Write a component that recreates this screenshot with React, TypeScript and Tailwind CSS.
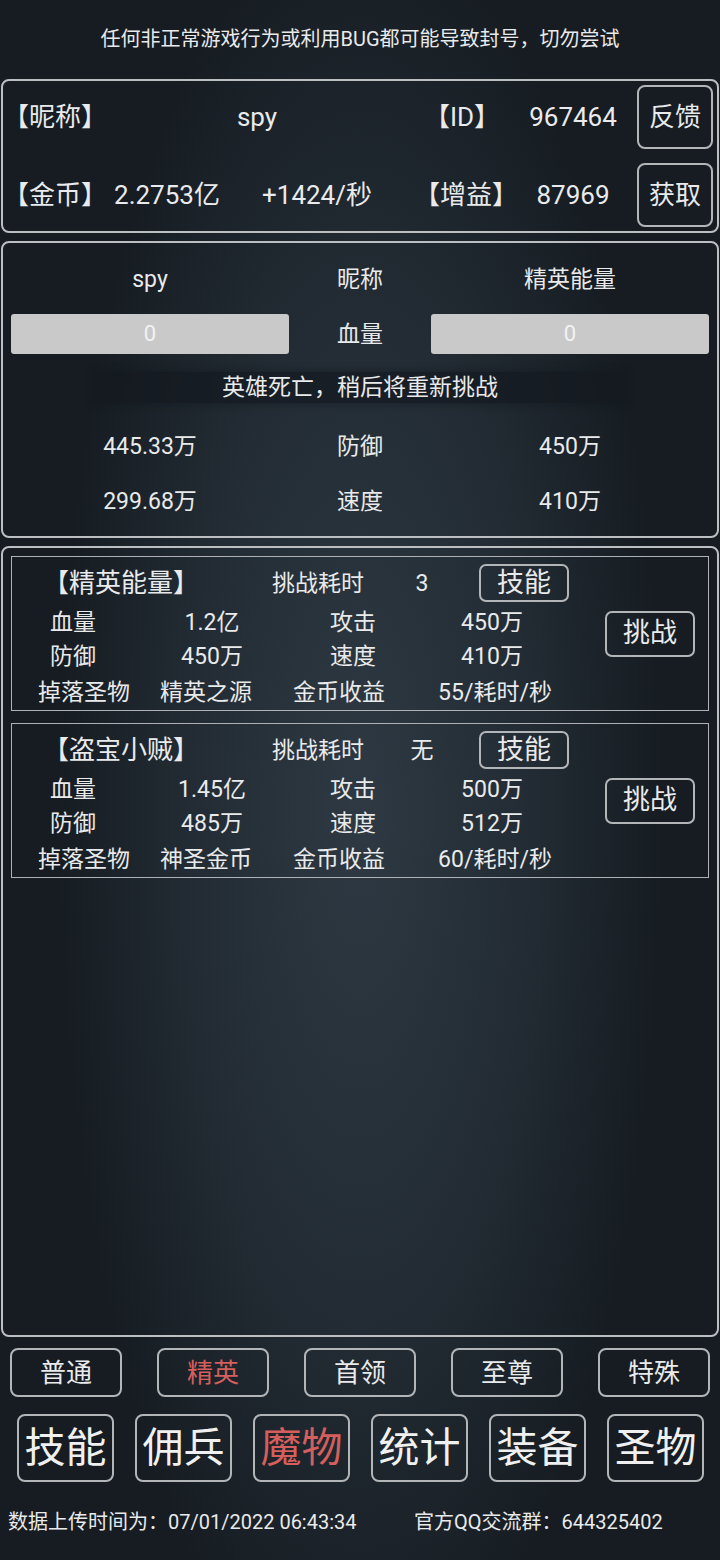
import React from "react";

const font = { fontFamily: 'Roboto, "Noto Sans CJK SC", sans-serif' };

function Card({
  title,
  time,
  hp,
  atk,
  def,
  spd,
  drop,
  gold,
}: {
  title: string;
  time: string;
  hp: string;
  atk: string;
  def: string;
  spd: string;
  drop: string;
  gold: string;
}) {
  return (
    <div className="flex h-[155px] border-[1.5px] border-[#aeb2b6]">
      <div className="flex w-[596px] flex-col">
        <div className="mt-[7px] flex h-[38px] items-center">
          <div className="w-[218px] text-center text-[26px] leading-none">{title}</div>
          <div className="w-[176px] text-center text-[23px] leading-none">挑战耗时</div>
          <div className="w-[32px] text-center text-[23px] leading-none">{time}</div>
          <div className="ml-[41px] flex h-[38px] w-[90px] items-center justify-center rounded-[7px] border-2 border-[#b3b6b9] text-[27px] leading-none">
            技能
          </div>
        </div>
        <div className="mt-[4px] flex h-[34px] items-center text-[23px] leading-none">
          <div className="w-[122px] text-center">血量</div>
          <div className="w-[156px] text-center">{hp}</div>
          <div className="w-[126px] text-center">攻击</div>
          <div className="w-[152px] text-center">{atk}</div>
        </div>
        <div className="flex h-[34px] items-center text-[23px] leading-none">
          <div className="w-[122px] text-center">防御</div>
          <div className="w-[156px] text-center">{def}</div>
          <div className="w-[126px] text-center">速度</div>
          <div className="w-[152px] text-center">{spd}</div>
        </div>
        <div className="mt-[1px] flex h-[36px] items-center text-[23px] leading-none">
          <div className="w-[144px] text-center">掉落圣物</div>
          <div className="w-[100px] text-center">{drop}</div>
          <div className="w-[166px] text-center">金币收益</div>
          <div className="w-[146px] text-center">{gold}</div>
        </div>
      </div>
      <div className="flex flex-1 items-center">
        <div className="ml-[-3px] flex h-[46px] w-[90px] items-center justify-center rounded-[7px] border-2 border-[#b3b6b9] text-[27px] leading-none">
          挑战
        </div>
      </div>
    </div>
  );
}

export default function App() {
  const tabs = ["普通", "精英", "首领", "至尊", "特殊"];
  const navs = ["技能", "佣兵", "魔物", "统计", "装备", "圣物"];
  return (
    <div
      style={font}
      className="flex h-[1560px] w-[720px] flex-col overflow-hidden bg-[radial-gradient(ellipse_42%_58%_at_50%_52%,#2e3943_0%,#232c34_55%,#161c22_100%)] text-[#e9eaeb]"
    >
      <div className="flex h-[79px] items-center justify-center pb-[2px] text-[20px] leading-none">
        任何非正常游戏行为或利用BUG都可能导致封号，切勿尝试
      </div>

      {/* panel 1 */}
      <div className="mx-[1px] flex h-[154px] flex-col gap-[14px] rounded-[8px] border-2 border-[#bcbfc2] pt-[4px] text-[26px] leading-none">
        <div className="flex h-[64px] items-center">
          <div className="w-[97px] text-center">【昵称】</div>
          <div className="w-[314px] text-center">spy</div>
          <div className="w-[96px] text-center">【ID】</div>
          <div className="w-[126px] text-center">967464</div>
          <div className="ml-[1px] flex h-[64px] w-[76px] items-center justify-center rounded-[8px] border-2 border-[#b3b6b9]">
            反馈
          </div>
        </div>
        <div className="flex h-[64px] items-center">
          <div className="w-[97px] text-center">【金币】</div>
          <div className="w-[134px] text-center">2.2753亿</div>
          <div className="w-[166px] text-center">+1424/秒</div>
          <div className="ml-[14px] w-[96px] text-center">【增益】</div>
          <div className="w-[126px] text-center">87969</div>
          <div className="ml-[1px] flex h-[64px] w-[76px] items-center justify-center rounded-[8px] border-2 border-[#b3b6b9]">
            获取
          </div>
        </div>
      </div>

      {/* panel 2 */}
      <div className="mx-[1px] mt-[8px] flex h-[297px] flex-col rounded-[8px] border-2 border-[#bcbfc2] px-[8px] pt-[16px] text-[23px] leading-none">
        <div className="grid h-[40px] grid-cols-[278px_142px_278px] items-center text-center">
          <div>spy</div>
          <div>昵称</div>
          <div>精英能量</div>
        </div>
        <div className="mt-[15px] grid h-[40px] grid-cols-[278px_142px_278px] items-center text-center">
          <div className="flex h-[40px] items-center justify-center rounded-[3px] bg-[#c9c9c9] text-[22px] text-[#f2f2f2]">0</div>
          <div>血量</div>
          <div className="flex h-[40px] items-center justify-center rounded-[3px] bg-[#c9c9c9] text-[22px] text-[#f2f2f2]">0</div>
        </div>
        <div className="mx-auto mt-[18px] flex h-[31px] w-[532px] items-center justify-center bg-[#141a20]/75 shadow-[0_0_6px_3px_rgba(20,26,32,0.4)]">
          英雄死亡，稍后将重新挑战
        </div>
        <div className="mt-[23px] grid h-[40px] grid-cols-[278px_142px_278px] items-center text-center">
          <div>445.33万</div>
          <div>防御</div>
          <div>450万</div>
        </div>
        <div className="mt-[15px] grid h-[40px] grid-cols-[278px_142px_278px] items-center text-center">
          <div>299.68万</div>
          <div>速度</div>
          <div>410万</div>
        </div>
      </div>

      {/* panel 3 */}
      <div className="mx-[1px] mt-[8px] flex h-[791px] flex-col gap-[12px] rounded-[8px] border-2 border-[#bcbfc2] px-[8px] pt-[8px]">
        <Card
          title="【精英能量】"
          time="3"
          hp="1.2亿"
          atk="450万"
          def="450万"
          spd="410万"
          drop="精英之源"
          gold="55/耗时/秒"
        />
        <Card
          title="【盗宝小贼】"
          time="无"
          hp="1.45亿"
          atk="500万"
          def="485万"
          spd="512万"
          drop="神圣金币"
          gold="60/耗时/秒"
        />
      </div>

      {/* tabs */}
      <div className="mt-[11px] flex h-[49px] gap-[35px] px-[10px]">
        {tabs.map((t) => (
          <div
            key={t}
            className={
              "flex h-[49px] w-[112px] items-center justify-center rounded-[8px] border-2 border-[#b3b6b9] text-[26px] leading-none " +
              (t === "精英" ? "text-[#d45f5d]" : "text-[#e9eaeb]")
            }
          >
            {t}
          </div>
        ))}
      </div>

      {/* nav */}
      <div className="mt-[17px] flex h-[68px] gap-[21px] pl-[17px]">
        {navs.map((t) => (
          <div
            key={t}
            className={
              "flex h-[68px] w-[97px] items-center justify-center rounded-[8px] border-2 border-[#b3b6b9] text-[41px] leading-none " +
              (t === "魔物" ? "text-[#d45f5d]" : "text-[#f0f0f0]")
            }
          >
            {t}
          </div>
        ))}
      </div>

      {/* footer */}
      <div className="mt-[28px] flex h-[24px] items-center text-[20px] leading-none">
        <div className="w-[406px] pl-[8px]">数据上传时间为：07/01/2022 06:43:34</div>
        <div className="pl-[8px]">官方QQ交流群：644325402</div>
      </div>
    </div>
  );
}
